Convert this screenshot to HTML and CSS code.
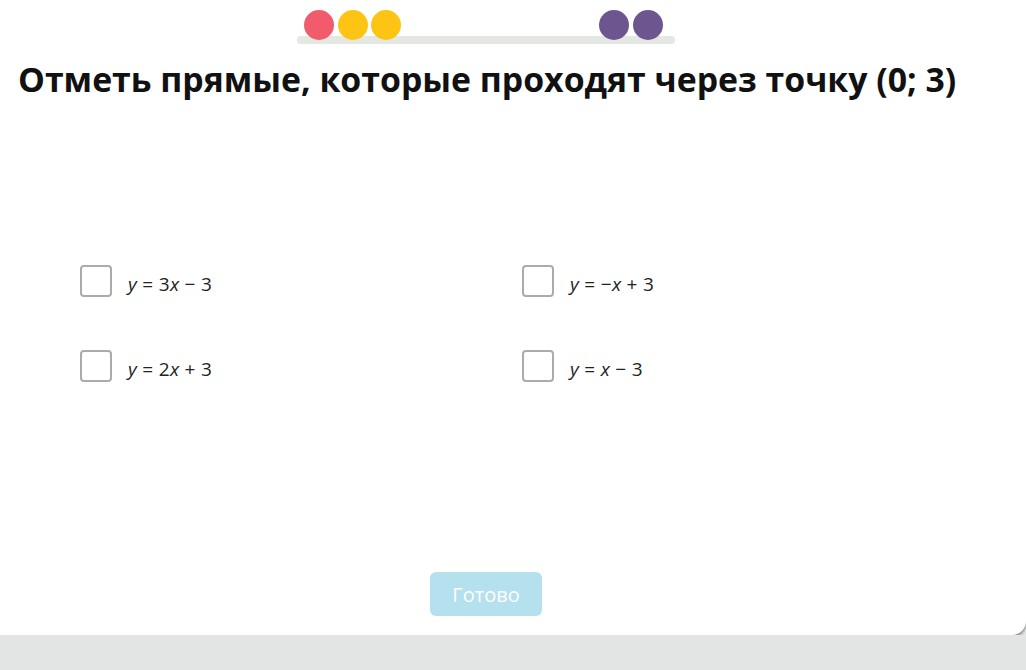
FILE: index.html
```html
<!DOCTYPE html>
<html lang="ru">
<head>
<meta charset="utf-8">
<link rel="stylesheet" href="styles.css">
</head>
<body>
<div class="card">
  <div class="progress">
    <div class="track"></div>
    <div class="dots">
      <span class="dot red"></span>
      <span class="dot yellow"></span>
      <span class="dot yellow"></span>
      <span class="gap"></span>
      <span class="dot purple"></span>
      <span class="dot purple"></span>
    </div>
  </div>
  <h1 class="title">Отметь прямые, которые проходят через точку (0; 3)</h1>
  <div class="options">
    <label class="opt"><span class="box"></span><span class="math"><i>y</i> = 3<i>x</i> − 3</span></label>
    <label class="opt"><span class="box"></span><span class="math"><i>y</i> = −<i>x</i> + 3</span></label>
    <label class="opt"><span class="box"></span><span class="math"><i>y</i> = 2<i>x</i> + 3</span></label>
    <label class="opt"><span class="box"></span><span class="math"><i>y</i> = <i>x</i> − 3</span></label>
  </div>
  <div class="actions">
    <button class="done">Готово</button>
  </div>
</div>
</body>
</html>
```
FILE: styles.css
```css
html, body {
  margin: 0;
  padding: 0;
  background: #e3e5e5;
  font-family: "Open Sans", "Liberation Sans", sans-serif;
  overflow: hidden;
}
.card {
  background: #fff;
  height: 635px;
  width: 1026px;
  border-bottom-right-radius: 14px;
  box-shadow: 0 2px 3px rgba(0,0,0,0.45);
  display: flex;
  flex-direction: column;
}
.progress {
  position: relative;
  width: 378px;
  height: 44px;
  margin-left: 297px;
}
.track {
  position: absolute;
  left: 0;
  right: 0;
  top: 36px;
  height: 8px;
  border-radius: 4px;
  background: #e5e7e3;
}
.dots {
  position: absolute;
  left: 7px;
  top: 10px;
  display: flex;
  gap: 3.5px;
}
.dot {
  width: 30px;
  height: 30px;
  border-radius: 50%;
  display: block;
}
.gap { width: 191px; }
.red { background: #f15b6c; }
.yellow { background: #fec414; }
.purple { background: #6d568f; }
.title {
  margin: 15px 0 0 18px;
  font-size: 33.8px;
  font-weight: 700;
  line-height: 40px;
  color: #111;
}
.options {
  margin: 166px 0 0 80px;
  display: grid;
  grid-template-columns: 442px 300px;
  row-gap: 53px;
}
.opt {
  display: flex;
  align-items: center;
  gap: 16px;
}
.box {
  width: 28px;
  height: 28px;
  border: 2px solid #ababab;
  border-radius: 4px;
  box-sizing: content-box;
}
.math {
  font-size: 19px;
  color: #222;
  padding-top: 5px;
  letter-spacing: 0.3px;
}
.math i { font-style: italic; }
.actions {
  margin-top: 190px;
  display: flex;
  justify-content: center;
  padding-right: 54px;
}
.done {
  width: 112px;
  height: 44px;
  border: none;
  border-radius: 6px;
  background: #b5e0ed;
  color: #fff;
  font-family: "Open Sans", "Liberation Sans", sans-serif;
  font-size: 20px;
  padding: 0;
}
```
